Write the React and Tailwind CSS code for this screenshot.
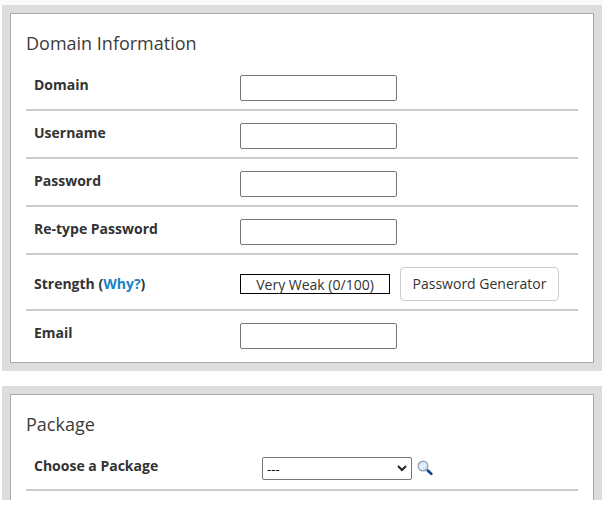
import React from 'react';

const inputClass = 'block w-[157px] h-[26px] bg-white border border-[#767676] rounded-[2px] px-1 text-sm';

function Panel({ title, className, titleClass = 'h-8', children }) {
  return (
    <section className={`w-[600px] bg-[#dddddd] p-2 ${className}`}>
      <div className="h-full bg-white border border-[#aaaaaa] px-[15px] pt-[17px]">
        <h2 className={`text-[18px] leading-[25px] font-normal text-[#3c3c3c] ${titleClass}`}>{title}</h2>
        {children}
      </div>
    </section>
  );
}

function Row({ label, className = 'h-12 border-b-2', labelClass = 'pt-3', children }) {
  return (
    <div className={`flex items-start border-[#cccccc] pl-2 ${className}`}>
      <div className={`w-[206px] shrink-0 text-sm leading-5 font-bold text-[#333333] ${labelClass}`}>{label}</div>
      {children}
    </div>
  );
}

function SearchIcon() {
  return (
    <svg width="16" height="16" viewBox="0 0 16 16" className="block">
      <defs>
        <linearGradient id="lens" x1="0" y1="0" x2="1" y2="1">
          <stop offset="0" stopColor="#b5d5f8" />
          <stop offset="0.5" stopColor="#e6f3ff" />
          <stop offset="1" stopColor="#a9d2fb" />
        </linearGradient>
      </defs>
      <path d="M9.5 9.5l2 1.5" stroke="#8a8a8a" strokeWidth="1.6" />
      <path d="M11 10.8l3.2 2.9" stroke="#0b4a94" strokeWidth="2.8" strokeLinecap="round" />
      <circle cx="6" cy="6" r="4.9" fill="url(#lens)" stroke="#969da8" strokeWidth="1.2" />
    </svg>
  );
}

export default function App() {
  const fields = [
    { label: 'Domain', type: 'text' },
    { label: 'Username', type: 'text' },
    { label: 'Password', type: 'password' },
    { label: 'Re-type Password', type: 'password' },
  ];

  return (
    <div className="w-[603px] h-[506px] overflow-hidden bg-white font-['Open_Sans',sans-serif] text-[#333333]">
      <div className="h-[5px] bg-[#fafafa]" />
      <div className="h-[495px] overflow-hidden pl-0.5">
        <Panel title="Domain Information" className="h-[366px]">
          {fields.map((field) => (
            <Row key={field.label} label={field.label}>
              <input type={field.type} aria-label={field.label} className={`${inputClass} mt-3`} />
            </Row>
          ))}
          <Row
            label={<>Strength (<a href="#" className="text-[#1a82c8]">Why?</a>)</>}
            className="h-14 border-b-2"
            labelClass="pt-[19px]"
          >
            <div className="mt-[19px] w-[150px] h-5 border border-black text-center text-sm leading-5">
              Very Weak (0/100)
            </div>
            <button className="ml-2.5 mt-3 w-[159px] h-[34px] bg-white border border-[#cccccc] rounded text-sm whitespace-nowrap">
              Password Generator
            </button>
          </Row>
          <Row label="Email" className="h-12">
            <input type="text" aria-label="Email" className={`${inputClass} mt-3`} />
          </Row>
        </Panel>

        <Panel title="Package" className="mt-[15px] h-[366px]" titleClass="h-[31px]">
          <Row label="Choose a Package" labelClass="pt-[13px]">
            <div className="relative ml-[22px] mt-3.5 w-[150px] h-[23px]">
              <select aria-label="Choose a Package" className="block appearance-none w-full h-full bg-white border border-[#767676] rounded-[2px] pl-1 text-[13.3px] leading-5 text-black">
                <option>---</option>
              </select>
              <svg width="10" height="7" viewBox="0 0 10 7" className="absolute right-[5px] top-2 pointer-events-none">
                <path d="M1 1l4 4 4-4" fill="none" stroke="#222222" strokeWidth="2" />
              </svg>
            </div>
            <div className="ml-[5px] mt-[17px]">
              <SearchIcon />
            </div>
          </Row>
        </Panel>
      </div>
    </div>
  );
}
